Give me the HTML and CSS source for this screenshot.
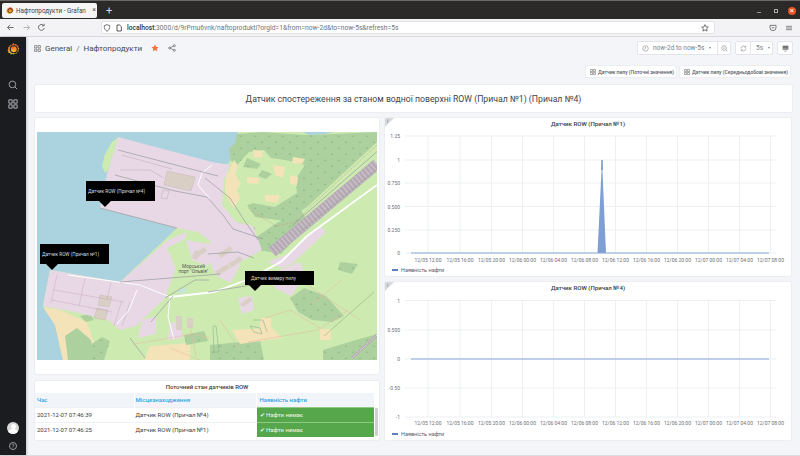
FILE: index.html
```html
<!DOCTYPE html>
<html lang="uk">
<head>
<meta charset="utf-8">
<title>Нафтопродукти - Grafana</title>
<link rel="stylesheet" href="styles.css">
</head>
<body>
<svg class="defs" width="0" height="0" aria-hidden="true">
  <defs>
    <linearGradient id="gf" x1="0" y1="1" x2="0" y2="0"><stop offset="0" stop-color="#f9c22c"/><stop offset="1" stop-color="#f0592a"/></linearGradient>
    <pattern id="forest" width="14" height="12" patternUnits="userSpaceOnUse"><rect width="14" height="12" fill="#add19e"/><path d="M3 3l1.500 2h-3zM10 9l1.500 2h-3z" fill="#93bd86"/></pattern>
    <symbol id="logo" viewBox="0 0 24 24">
      <path fill="url(#gf)" d="M12 1l2 2.600 3-1.200.8 3.100 3.200.2-.5 3.200 2.500 2-2.200 2.400 1 3-3.100.8-.6 3.200-3.200-.5-2 2.500-3-1.600-2.800 1.500-1.400-2.900-3.200.2.1-3.200L.7 14.800l2-2.500L1.500 9.300l3-1 .2-3.200 3.200.3z"/>
      <circle cx="12.500" cy="12.500" r="6.500" fill="none" stroke="#1a1c20" stroke-width="2"/>
      <path d="M12.500 9.500a3 3 0 1 0 3 3" fill="none" stroke="url(#gf)" stroke-width="2"/>
    </symbol>
    <symbol id="apps" viewBox="0 0 12 12">
      <path fill="none" stroke="currentColor" stroke-width="1" d="M1 1h4v4H1zM7 1h4v4H7zM1 7h4v4H1zM7 7h4v4H7z"/>
    </symbol>
  </defs>
</svg>
<div class="window">
  <div class="tabbar">
    <div class="tab">
      <svg class="favicon"><use href="#logo"/></svg>
      <span class="tab-title">Нафтопродукти - Grafan</span>
      <span class="tab-close">×</span>
    </div>
    <span class="tab-new">+</span>
    <div class="winbtns">
      <span class="win-min"></span>
      <span class="win-max"></span>
      <span class="win-close">×</span>
    </div>
  </div>
  <div class="navbar">
    <svg class="nav-ico" viewBox="0 0 12 12"><path d="M10 6H2M5.500 2.500L2 6l3.500 3.500" fill="none" stroke="#555" stroke-width="1.100"/></svg>
    <svg class="nav-ico nav-off" viewBox="0 0 12 12"><path d="M2 6h8M6.500 2.500L10 6 6.500 9.500" fill="none" stroke="#aaa" stroke-width="1.100"/></svg>
    <svg class="nav-ico nav-reload" viewBox="0 0 12 12"><path d="M9.800 6.500A3.900 3.900 0 1 1 8.600 3M9.500 1v2.800H6.700" fill="none" stroke="#555" stroke-width="1.100"/></svg>
    <div class="urlbar">
      <svg class="url-ico" viewBox="0 0 12 12"><path d="M6 1l4.200 1.500c0 4-1.200 6.800-4.200 8.500C3 9.300 1.800 6.500 1.800 2.500z" fill="none" stroke="#444" stroke-width="1.100"/></svg>
      <svg class="url-ico" viewBox="0 0 12 12"><path d="M3 1.500h4l2.500 2.500v6.500H3z" fill="none" stroke="#333" stroke-width="1.200"/></svg>
      <span class="url"><b>localhost</b>:3000/d/9rPmu6vnk/naftoprodukti?orgId=1&amp;from=now-2d&amp;to=now-5s&amp;refresh=5s</span>
      <svg class="url-star" viewBox="0 0 12 12"><path d="M6 1l1.500 3.300 3.500.4-2.600 2.400.7 3.500L6 8.800l-3.100 1.800.7-3.500L1 4.700l3.500-.4z" fill="none" stroke="#333" stroke-width="1"/></svg>
    </div>
    <svg class="nav-ico pocket" viewBox="0 0 12 12"><path d="M1.500 2h9v3.500a4.500 4.500 0 0 1-9 0z" fill="none" stroke="#444" stroke-width="1"/><path d="M4 4.500L6 6.500l2-2" fill="none" stroke="#444" stroke-width="1"/></svg>
    <svg class="nav-ico menu" viewBox="0 0 12 12"><path d="M1.500 3.500h9M1.500 6h9M1.500 8.500h9" stroke="#555" stroke-width="1"/></svg>
  </div>
  <div class="app">
    <aside class="sidebar">
      <svg class="side-logo"><use href="#logo"/></svg>
      <svg class="side-ico side-search" viewBox="0 0 12 12"><circle cx="5.300" cy="5.300" r="4" fill="none" stroke="#c7c8cc" stroke-width=".9"/><path d="M8.300 8.300l2.700 2.700" stroke="#c7c8cc" stroke-width=".9"/></svg>
      <svg class="side-ico side-apps"><use href="#apps"/></svg>
      <div class="side-space"></div>
      <div class="avatar"><span class="avatar-head"></span><span class="avatar-body"></span></div>
      <div class="help">?</div>
    </aside>
    <main class="main">
      <div class="toolbar">
        <svg class="crumb-ico"><use href="#apps"/></svg>
        <span class="crumb">General</span><span class="crumb-sep">/</span><span class="crumb">Нафтопродукти</span>
        <svg class="star" viewBox="0 0 12 12"><path fill="#f2703a" d="M6 .8l1.600 3.500 3.700.4-2.800 2.500.8 3.800L6 9l-3.300 2 .8-3.800L.7 4.700l3.700-.4z"/></svg>
        <svg class="share" viewBox="0 0 12 12"><g fill="none" stroke="#555" stroke-width="1"><circle cx="2.500" cy="6" r="1.500"/><circle cx="9.500" cy="2.500" r="1.500"/><circle cx="9.500" cy="9.500" r="1.500"/><path d="M4 5.300l4.200-2.100M4 6.700l4.200 2.100"/></g></svg>
        <div class="toolbar-right">
          <div class="btn-group">
            <div class="tbtn tbtn-time">
              <svg class="tico" viewBox="0 0 12 12"><circle cx="6" cy="6" r="4.700" fill="none" stroke="#777" stroke-width=".9"/><path d="M6 3v3l-2 1.500" fill="none" stroke="#777" stroke-width=".9"/></svg>
              <span>now-2d to now-5s</span><i class="caret"></i>
            </div>
            <div class="tbtn tbtn-zoom"><svg class="tico" viewBox="0 0 12 12"><circle cx="5.300" cy="5.300" r="4" fill="none" stroke="#777" stroke-width=".9"/><path d="M8.300 8.300l2.700 2.700M3.500 5.300h3.600" stroke="#777" stroke-width=".9"/></svg></div>
          </div>
          <div class="btn-group">
            <div class="tbtn tbtn-refresh"><svg class="tico" viewBox="0 0 12 12"><path d="M10.300 6A4.300 4.300 0 0 1 2.500 8.500M1.700 6a4.300 4.300 0 0 1 7.800-2.500M9.800 1.500v2.200H7.600M2.200 10.500V8.300h2.200" fill="none" stroke="#777" stroke-width=".9"/></svg></div>
            <div class="tbtn tbtn-rate"><span>5s</span><i class="caret"></i></div>
          </div>
          <div class="tbtn tbtn-tv"><svg class="tico" viewBox="0 0 12 12"><path d="M1.500 1.500h9v6.500h-9z" fill="#777" stroke="#777" stroke-width=".8"/><path d="M1.500 6.500h9" stroke="#fff" stroke-width=".5"/><path d="M4 10.500h4" stroke="#777"/></svg></div>
        </div>
      </div>
      <div class="links">
        <div class="link"><svg class="link-ico"><use href="#apps"/></svg>Датчик пилу (Поточні значення)</div>
        <div class="link"><svg class="link-ico"><use href="#apps"/></svg>Датчик пилу (Середньодобові значення)</div>
      </div>
      <div class="board">
        <section class="panel headline">Датчик спостереження за станом водної поверхні ROW (Причал №1) (Причал №4)</section>
        <div class="col-left">
          <section class="panel map-panel">
            <div class="map">
              <svg class="map-svg" viewBox="37 132 340 228" preserveAspectRatio="none">
                <rect x="37" y="132" width="340" height="228" fill="#cdebb0"/>
                <path fill="#aad3df" d="M37 132H238L235 148 229 163 200 172 177 228 120 282 50 270 43 306 55 325 63 360H37z"/>
                <!-- beach -->
                <path fill="#f4e3b8" d="M43 307L60 310 87 322 95 345 100 360H63L55 325z"/>
                <path fill="#add19e" d="M68 360l-3-24 12-8 14 12 4 20zM80 316l10-2 4 6-8 2z"/>
                <!-- north-east forest -->
                <path fill="url(#forest)" d="M237 134l25-2 42 3 30-1 43-2v10l-70 65-8-2-4-25 10-15-20-5-14-2-7-8-15 2-12 13-6-4-2-12 6-6z"/>
                <path fill="#aad3df" d="M303 132h30l-8 2-16 1z"/>
                <path fill="url(#forest)" d="M247 158l14 6-4 5-14-2zM262 170l10 4-6 5-8-3zM300 191l7 16-22 14-30-4-8-12 6-2 22 4z"/>
                <path fill="#f4e3b8" d="M253 150l10 1 0 6-9 1zM293 157l12 2-3 5-10-1zM265 195l15 0-3 8-12-2zM290 175l8 2-1 9-7-3zM247 177l13 1-2 6-11-1zM273 165l12 2-2 11-8-3zM234 160l4 6-3 8 6 10-6 8-6-12 1-12z"/>
                <path fill="url(#forest)" d="M255 238l20-14 26-14 8 14-28 30-22-4zM238 222l18 6-14 16-8-10z"/>
                <!-- south forests, grounds -->
                <path fill="url(#forest)" d="M290 298l14-10 22 8 18 20-12 6-20-2-14-8zM340 262l18 2-6 10-14-4z"/>
                <path fill="url(#forest)" d="M210 345l50-5 4 20h-54zM323 350l26-8 28-8v26h-54z"/>
                <path fill="#f4e3b8" d="M137 347l53-4v17h-56zM260 318h11v11h-11zM320 329h11v11h-11zM232 330l40-2 10 10-42 6z"/>
                <path fill="url(#forest)" d="M137 302l16 4-6 6-12-2zM90 345l12-8 8 4-6 19h-12zM184 335l20-4 4 10-22 4z"/>
                <!-- upper pier -->
                <path fill="#e8d8e6" d="M118 137L212 162 230 165 224 180 222 205 236 222 253 226 262 250 240 262 222 250 198 232 177 228 100 208 108 170 114 150z"/>
                <path fill="#cdebb0" d="M118 137l-4 14-6 19-3 3-3-7 3-12 7-12z"/>
                <path fill="#f4e3b8" d="M227 172l8 4-1 8 6 14-6 10-8-12-1-12z"/>
                <path fill="#d9cfc4" stroke="#bfb4ad" stroke-width=".4" d="M167 171l28 6-4 14-27-6z"/>
                <path fill="none" stroke="#b8a9b4" stroke-width=".5" d="M163 190l-2 8 6 1 2-8zM120 170h30l14 8M122 155l50 14"/>
                <!-- lower pier -->
                <path fill="#e8d8e6" d="M50 270L120 282 168 240 187 232 178 262 165 298 136 326 120 330 108 320 75 312 43 306z"/>
                <path fill="#cdebb0" d="M167 248l20-10 20 6 16 16 6 14 8 18 0 14-20 14-50 10-14 8-10 26h-12l10-30 30-30 8-28z"/>
                <path fill="#d9cfc4" stroke="#bfb4ad" stroke-width=".4" d="M100 295l12 2-3 10-11-2zM97 308l11 2-3 10-11-2z"/>
                <path fill="none" stroke="#c9a9bf" stroke-width=".5" d="M57 275l-6 28M85 278l-6 28M54 290l70 12M111 283l-4 16M122 300l-8 26M130 302l-8 24M52 300l60 12"/>
                <!-- port area -->
                <path fill="#e8d8e6" d="M186 240l24 4 6 8-8 14-16-6zM210 240l20 4 13 14-12 25-16-8-6-16zM275 272l25-10 5 14-14 20-16-8zM238 298l14-2 2 14-12 4zM268 262l20-8 32-28 6 6-34 32-10 4zM170 322l12 2 0 14-14 2zM138 338l4-18 14-4v18z"/>
                <path fill="#d9cfc4" d="M218 254l12-8 3 4-12 8zM228 264l12-8 3 4-12 8zM215 272l12-8 3 4-12 8zM282 278l14-9 2 4-14 9zM240 304l10-7 3 3-10 7zM176 316l6 0 0 14-6 0zM187 318l6 0v10h-6zM195 250l5 2-3 8-5-2zM192 255l12-8 3 4-12 8z"/>
                <path fill="#c4e6d8" d="M178 290l8-2 1 4-8 2z"/>
                <!-- rail band, roads -->
                <path stroke="#b5aab3" stroke-width="11" fill="none" d="M377 164L272 252"/>
                <path stroke="#cbbfca" stroke-width="10" stroke-dasharray="1.500 2.500" fill="none" d="M377 164L272 252"/>
                <path stroke="#fff" stroke-width="1.800" fill="none" d="M377 185L307 236 282 261 252 278 214 292 170 297"/>
                <path stroke="#fff" stroke-width="1" fill="none" d="M170 297l-30-12-72-10M137 290l-8 20-12 14M170 297l-2 20 6 22M212 165l-10 8-4 12 12 14"/>
                <path stroke="#a2a2a2" stroke-width=".8" fill="none" d="M118 150l100 26M115 175l60 16 32 6 16 18 10 14 30 10M100 208l77 20M205 178l25 20 14 22 14 20M208 292l50-8M208 254l30-2 16 6M380 149L309 211 292 226M376 170L300 232M165 298l30-18 14 0M130 338l15 20M151 322l22-26M120 282l100-8"/>
                <path stroke="#c48e82" stroke-width=".6" stroke-dasharray="1 1" fill="none" d="M377 145L312 205 296 222 276 226 256 214 248 208"/>
                <path stroke="#b5aab3" stroke-width="2.500" fill="none" d="M377 335L352 358"/>
                <path stroke="#e4dde2" stroke-width="1" stroke-dasharray="2 1" fill="none" d="M377 335L352 358"/>
                <path stroke="#e8b8a8" stroke-width=".6" fill="none" d="M342 280l-30 24M300 280l60 40M265 318l25-8 30 18M248 342l70-12 30-20M220 320l20 30M134 344l60-10 16 4M170 348l30 12M190 326l6 30"/>
                <path fill="none" stroke="#8db18c" stroke-width=".6" d="M374 292l-50 44M253 320h10l4 12M216 326l3 26h-5l-1-26zM250 326l10 2 2 6-8-2z"/>
                <text class="map-label" x="193.500" y="267.500">Морський</text>
                <text class="map-label" x="193.500" y="272.500">порт "Ольвія"</text>
              </svg>
              <div class="pin pin-a">Датчик ROW (Причал №4)</div>
              <div class="pin pin-b">Датчик ROW (Причал №1)</div>
              <div class="pin pin-c">Датчик вимеру пилу</div>
            </div>
          </section>
          <section class="panel table-panel">
            <h3 class="table-title">Поточний стан датчиків ROW</h3>
            <div class="table-body">
              <table class="table">
                <thead><tr><th>Час</th><th>Місцезнаходження</th><th>Наявність нафти</th></tr></thead>
                <tbody>
                  <tr><td>2021-12-07 07:46:39</td><td>Датчик ROW (Причал №4)</td><td class="ok">✔ Нафти немає</td></tr>
                  <tr><td>2021-12-07 07:46:25</td><td>Датчик ROW (Причал №1)</td><td class="ok">✔ Нафти немає</td></tr>
                </tbody>
              </table>
              <span class="scroll"></span>
            </div>
          </section>
        </div>
        <div class="col-right">
          <section class="panel graph">
            <span class="corner"></span><span class="corner-i">i</span>
            <h3 class="graph-title">Датчик ROW (Причал №1)</h3>
            <svg class="chart" viewBox="0 0 408 150">
              <g class="grid">
                <path d="M20 8H391M20 32H391M20 55H391M20 78.500H391M20 102H391M20 125H391"/>
                <path d="M43 8V125M75 8V125M106.500 8V125M137.500 8V125M168.500 8V125M199.500 8V125M230.500 8V125M261.500 8V125M292.500 8V125M323.500 8V125M354.500 8V125M385.500 8V125"/>
              </g>
              <g class="ylab">
                <text x="15" y="10">1.25</text><text x="15" y="34">1</text><text x="15" y="57">0.750</text><text x="15" y="80.500">0.500</text><text x="15" y="104">0.250</text><text x="15" y="127">0</text>
              </g>
              <path class="area" d="M212.500 125L217 32 221 125z"/>
              <path class="peak" d="M217 32v10"/>
              <path class="line" d="M26 125H384"/>
              <g class="xlab">
                <text x="43" y="133.500">12/05 12:00</text><text x="75" y="133.500">12/05 16:00</text><text x="106.500" y="133.500">12/05 20:00</text><text x="137.500" y="133.500">12/06 00:00</text><text x="168.500" y="133.500">12/06 04:00</text><text x="199.500" y="133.500">12/06 08:00</text><text x="230.500" y="133.500">12/06 12:00</text><text x="261.500" y="133.500">12/06 16:00</text><text x="292.500" y="133.500">12/06 20:00</text><text x="323.500" y="133.500">12/07 00:00</text><text x="354.500" y="133.500">12/07 04:00</text><text x="385.500" y="133.500">12/07 08:00</text>
              </g>
              <path class="legend-key" d="M7 142h6"/>
              <text class="legend" x="16" y="144">Наявність нафти</text>
            </svg>
          </section>
          <section class="panel graph">
            <span class="corner"></span><span class="corner-i">i</span>
            <h3 class="graph-title">Датчик ROW (Причал №4)</h3>
            <svg class="chart" viewBox="0 0 408 150">
              <g class="grid">
                <path d="M20 8.500H391M20 38H391M20 67H391M20 96H391M20 125H391"/>
                <path d="M43 8.500V125M75 8.500V125M106.500 8.500V125M137.500 8.500V125M168.500 8.500V125M199.500 8.500V125M230.500 8.500V125M261.500 8.500V125M292.500 8.500V125M323.500 8.500V125M354.500 8.500V125M385.500 8.500V125"/>
              </g>
              <g class="ylab">
                <text x="15" y="10.500">1</text><text x="15" y="40">0.500</text><text x="15" y="69">0</text><text x="15" y="98">-0.50</text><text x="15" y="127">-1</text>
              </g>
              <path class="line" d="M26 67H384"/>
              <g class="xlab">
                <text x="43" y="133">12/05 12:00</text><text x="75" y="133">12/05 16:00</text><text x="106.500" y="133">12/05 20:00</text><text x="137.500" y="133">12/06 00:00</text><text x="168.500" y="133">12/06 04:00</text><text x="199.500" y="133">12/06 08:00</text><text x="230.500" y="133">12/06 12:00</text><text x="261.500" y="133">12/06 16:00</text><text x="292.500" y="133">12/06 20:00</text><text x="323.500" y="133">12/07 00:00</text><text x="354.500" y="133">12/07 04:00</text><text x="385.500" y="133">12/07 08:00</text>
              </g>
              <path class="legend-key" d="M7 142h6"/>
              <text class="legend" x="16" y="144">Наявність нафти</text>
            </svg>
          </section>
        </div>
      </div>
    </main>
  </div>
</div>
</body>
</html>
```
FILE: styles.css
```css
* { box-sizing: border-box; }
html, body { margin: 0; padding: 0; }
body { width: 800px; height: 456px; overflow: hidden; font-family: Roboto, "Liberation Sans", sans-serif; color: #464c54; background: #f4f5f8; }
.defs { position: absolute; }
.window { display: flex; flex-direction: column; height: 456px; }

.tabbar { height: 19px; flex: none; display: flex; align-items: flex-start; background: #2c2a29; border-top: 1px solid #6a6866; padding: 2px 0 0 2px; }
.tab { width: 95px; height: 15px; background: #f5f5f6; border-radius: 2px; display: flex; align-items: center; gap: 2px; padding: 0 1px 0 2px; font-size: 6.300px; color: #333; white-space: nowrap; }
.favicon { width: 8px; height: 9px; margin-left: 2px; flex: none; }
.tab-title { flex: none; color: #444; }
.tab-close { font-size: 7px; margin-left: auto; flex: none; color: #555; line-height: 1; }
.tab-new { color: #ddd; font-size: 11px; line-height: 15px; margin-left: 9px; }
.winbtns { margin-left: auto; display: flex; align-items: center; height: 15px; padding-right: 4px; }
.win-min { width: 4px; height: 1px; background: #999; margin: 4px 13px 0 0; }
.win-max { width: 4px; height: 4px; border: 1px solid #aaa; margin-right: 10px; }
.win-close { width: 8px; height: 8px; border-radius: 50%; background: #e95420; color: #fff; font-size: 8px; line-height: 8px; text-align: center; }

.navbar { height: 18px; flex: none; display: flex; align-items: center; background: #f3f3f5; border-bottom: 1px solid #d8d8da; padding: 0 7px 0 6px; }
.nav-ico { width: 9px; height: 9px; flex: none; margin-right: 7px; }
.nav-off { margin-right: 6px; }
.nav-reload { margin-right: 0; }
.urlbar { width: 614px; height: 13px; margin-left: 55px; background: #fff; border: 1px solid #e2e2e4; border-radius: 2px; display: flex; align-items: center; padding: 0 4px 0 1px; font-size: 6.700px; color: #6e7480; white-space: nowrap; }
.url-ico { width: 8px; height: 8px; margin-right: 4px; flex: none; }
.url { flex: 1; overflow: hidden; }
.url b { color: #333; font-weight: 500; }
.url-star { width: 8px; height: 8px; flex: none; margin-right: 1px; }
.pocket { margin-left: 54px; margin-right: 8px; width: 8px; height: 8px; }
.menu { margin: 0; width: 8px; height: 8px; }

.app { flex: 1; display: flex; min-height: 0; border-bottom: 1px solid #dcdde0; }
.sidebar { width: 26px; flex: none; background: #1a1c20; display: flex; flex-direction: column; align-items: center; padding: 5px 0 4px; box-shadow: 1px 0 2px rgba(0,0,0,.2); }
.side-logo { width: 13px; height: 14px; flex: none; }
.side-ico { flex: none; color: #c7c8cc; width: 10px; height: 10px; }
.side-search { margin-top: 24px; }
.side-apps { margin-top: 9px; }
.side-space { flex: 1; }
.avatar { width: 12px; height: 12px; border-radius: 50%; background: #d8d8d8; overflow: hidden; display: flex; flex-direction: column; align-items: center; margin-bottom: 8px; }
.avatar-head { width: 5px; height: 5px; margin-top: 2px; border-radius: 50%; background: #fff; flex: none; }
.avatar-body { width: 10px; height: 6px; border-radius: 50%; background: #fff; flex: none; }
.help { width: 8px; height: 8px; border: 1px solid #9a9ca2; border-radius: 50%; color: #b0b2b8; font-size: 6px; line-height: 6px; text-align: center; margin-bottom: 1px; }

.main { flex: 1; min-width: 0; padding: 0 7px 0 8px; display: flex; flex-direction: column; }
.toolbar { height: 21px; flex: none; display: flex; align-items: center; padding-top: 1px; color: #464c54; }
.crumb-ico { width: 7px; height: 7px; color: #555; margin-right: 4px; flex: none; }
.crumb { font-size: 8px; }
.crumb-sep { font-size: 8px; margin: 0 4px; color: #777; }
.star { width: 8px; height: 8px; margin-left: 9px; flex: none; }
.share { width: 8px; height: 8px; margin-left: 9px; flex: none; }
.toolbar-right { margin-left: auto; display: flex; gap: 4px; }
.btn-group { display: flex; background: #fff; border: 1px solid #e3e5e9; border-radius: 2px; height: 14px; }
.tbtn { display: flex; align-items: center; font-size: 6.500px; color: #7b8087; white-space: nowrap; height: 100%; }
.tbtn-time { width: 79px; padding-left: 4px; }
.tbtn-zoom { width: 13px; border-left: 1px solid #e3e5e9; justify-content: center; }
.tbtn-refresh { width: 15px; border-right: 1px solid #e3e5e9; justify-content: center; }
.tbtn-rate { width: 21px; padding-left: 5px; }
.tbtn-tv { width: 16px; height: 14px; background: #fff; border: 1px solid #e3e5e9; border-radius: 2px; justify-content: center; }
.tico { width: 7px; height: 7px; flex: none; }
.tbtn-time .tico { margin-right: 4px; }
.caret { width: 0; height: 0; border: 1.500px solid transparent; border-top: 2px solid #888; border-bottom: 0; margin-left: 5px; }

.links { height: 26px; flex: none; display: flex; justify-content: flex-end; gap: 2px; padding: 7px 2px 6px 0; }
.link { display: flex; align-items: center; height: 13px; padding: 0 2px 0 4px; background: #fff; border: 1px solid #eceef1; border-radius: 2px; font-size: 5px; font-weight: 500; color: #555b63; white-space: nowrap; }
.link-ico { width: 6px; height: 6px; margin-right: 2px; flex: none; color: #555; }

.board { display: grid; grid-template-columns: 346px 408px; grid-template-rows: 29px 324px; gap: 4px; }
.panel { background: #fff; border: 1px solid #eceef1; border-radius: 2px; }
.headline { grid-column: 1 / 3; width: 759px; display: flex; align-items: center; justify-content: center; font-size: 8.700px; color: #3f444b; }
.col-left { display: flex; flex-direction: column; gap: 5px; }
.col-right { display: flex; flex-direction: column; gap: 4px; }

.map-panel { height: 258px; padding: 14px 3px 15px 2px; }
.map { position: relative; width: 340px; height: 228px; }
.map-svg { display: block; width: 340px; height: 228px; }
.map-label { font-size: 4.800px; fill: #5a5560; text-anchor: middle; font-family: Roboto, sans-serif; }
.pin { position: absolute; background: #000; color: #ddd; font-size: 4.700px; display: flex; align-items: center; width: 69px; height: 20px; white-space: nowrap; }
.pin::after { content: ""; position: absolute; top: 100%; border: 6px solid transparent; border-top-color: #000; border-bottom: 0; }
.pin-a { left: 49px; top: 49px; padding-left: 2px; }
.pin-a::after { left: 13px; }
.pin-b { left: 3px; top: 112px; padding-left: 2px; }
.pin-b::after { left: 6px; }
.pin-c { left: 208px; top: 139px; height: 14px; padding-left: 6px; }
.pin-c::after { left: 4px; }

.table-panel { height: 61px; padding: 0; }
.table-title { margin: 0; height: 12px; line-height: 12px; font-size: 6px; font-weight: 500; color: #3c4046; text-align: center; }
.table-body { position: relative; }
.table { border-collapse: collapse; width: 339px; table-layout: fixed; font-size: 6px; color: #3c4046; }
.table th { height: 14px; background: #f1f5f9; color: #33a2e5; font-weight: 500; text-align: left; padding: 0 1px; border-left: 1px solid #fff; }
.table th:nth-child(1), .table td:nth-child(1) { width: 99px; padding-left: 2px; border-left: 0; }
.table th:nth-child(2), .table td:nth-child(2) { width: 122px; }
.table th:nth-child(3) { padding-left: 3px; }
.table td { height: 15px; padding: 0 1px; border-top: 1px solid #eef0f3; border-left: 1px solid #fff; white-space: nowrap; }
.table .ok { background: #56a64b; color: #eef7ec; padding-left: 3px; border-top-color: #8fca84; }
.scroll { position: absolute; left: 340px; top: 15px; width: 3px; height: 28px; background: #cfcfcf; border-radius: 1px; }

.graph { position: relative; height: 160px; overflow: hidden; }
.corner { position: absolute; left: 0; top: 0; border-style: solid; border-width: 9px 9px 0 0; border-color: #d8d9dc transparent transparent transparent; }
.corner-i { position: absolute; left: 2px; top: 0; font-size: 5px; color: #777; line-height: 6px; }
.graph-title { margin: 0; height: 10px; line-height: 11px; font-size: 6.100px; font-weight: 500; color: #3c4046; text-align: center; }
.chart { display: block; width: 408px; height: 150px; }
.grid path { stroke: #edeff2; stroke-width: 1; fill: none; }
.ylab text { font-size: 5px; fill: #6a6f76; text-anchor: end; }
.xlab text { font-size: 5px; fill: #6a6f76; text-anchor: middle; }
.area { fill: #7e9fd3; }
.peak { stroke: #3a66b0; stroke-width: 1; }
.line { stroke: #8aa8d6; stroke-width: 1.200; fill: none; }
.legend-key { stroke: #2a55a8; stroke-width: 1.500; }
.legend { font-size: 5.500px; fill: #5b6068; }
```
